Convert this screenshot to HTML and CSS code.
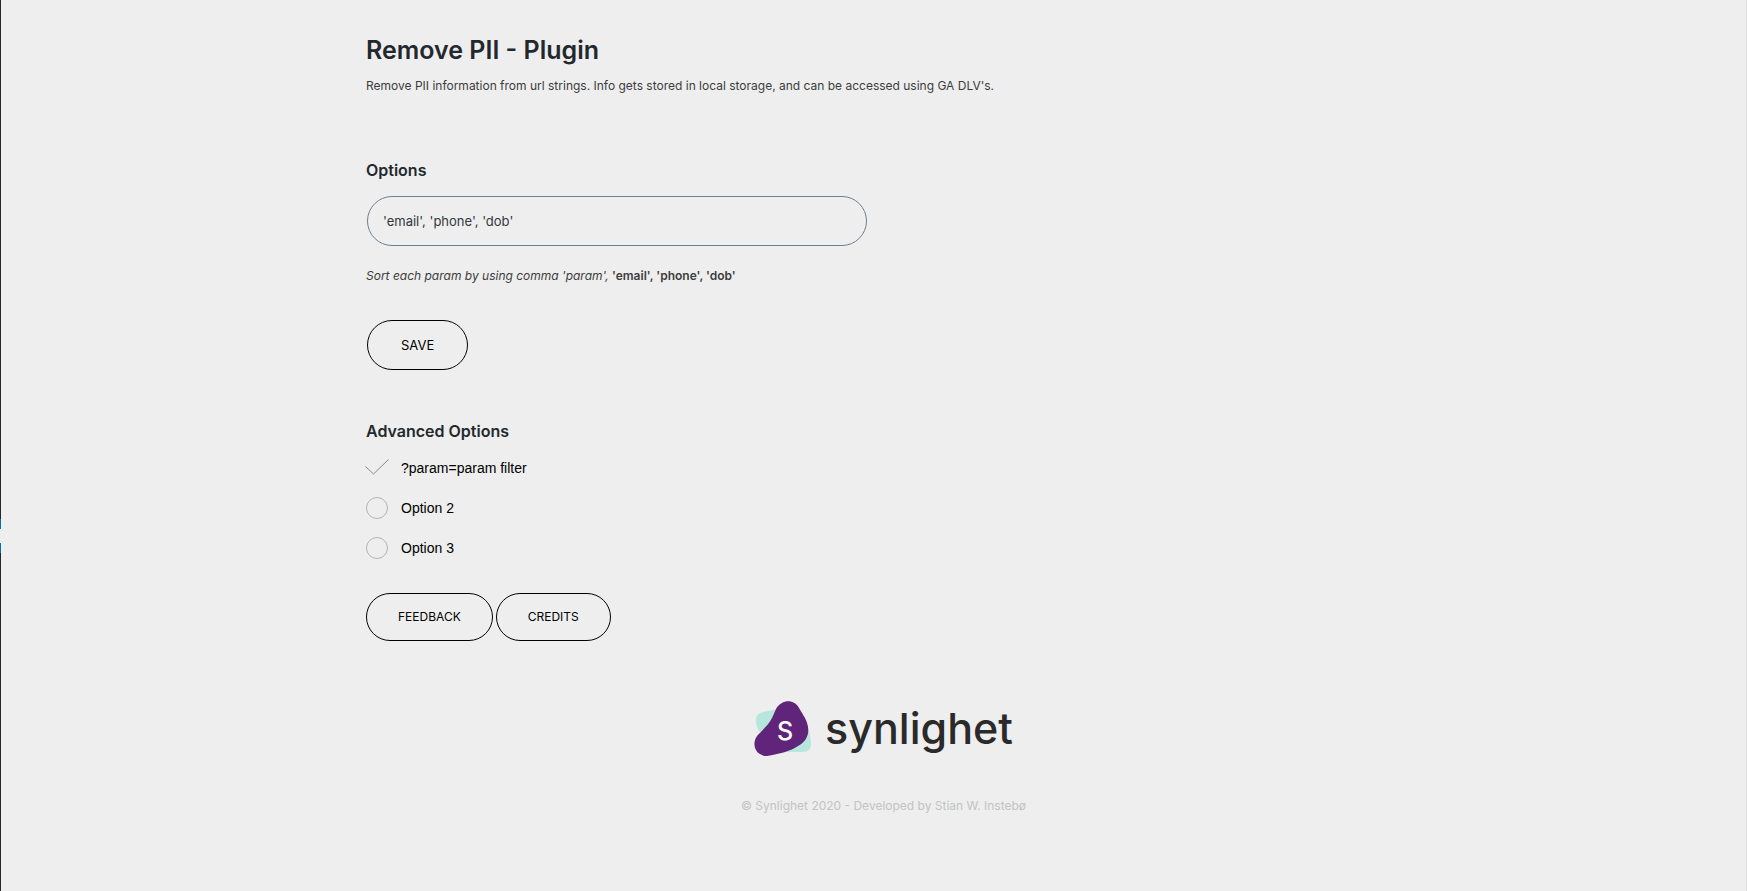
FILE: index.html
```html
<!DOCTYPE html>
<html lang="en">
<head>
<meta charset="utf-8">
<title>Remove PII - Plugin</title>
<link rel="stylesheet" href="styles.css">
</head>
<body>
<div class="menu-edge" aria-hidden="true">
  <span class="edge-dark"></span>
  <span class="edge-current"></span>
  <span class="edge-arrow"></span>
  <span class="edge-current"></span>
  <span class="edge-dark edge-rest"></span>
</div>
<main class="content">
  <div class="wrap">
    <h1 class="title">Remove PII - Plugin</h1>
    <p class="intro">Remove PII information from url strings. Info gets stored in local storage, and can be accessed using GA DLV's.</p>

    <form class="form">
      <h2 class="heading"><label for="params">Options</label></h2>
      <input class="field" id="params" type="text" value="'email', 'phone', 'dob'">
      <p class="hint"><em>Sort each param by using comma 'param',</em> <strong>'email', 'phone', 'dob'</strong></p>
      <button class="button button-save" type="button">SAVE</button>
    </form>

    <h2 class="heading">Advanced Options</h2>
    <ul class="options">
      <li><label class="option"><input class="check" type="checkbox" checked><svg class="tick" viewBox="0 0 24 18" aria-hidden="true"><path d="M0.5 8.5 8.5 16 23.5 1.5"/></svg><span>?param=param filter</span></label></li>
      <li><label class="option"><input class="check" type="checkbox"><span>Option 2</span></label></li>
      <li><label class="option"><input class="check" type="checkbox"><span>Option 3</span></label></li>
    </ul>

    <div class="links">
      <a class="button" href="#feedback">FEEDBACK</a>
      <a class="button" href="#credits">CREDITS</a>
    </div>

    <footer class="footer">
      <div class="logo">
        <svg class="mark" viewBox="0 0 57 55" aria-hidden="true">
          <path class="mark-back" d="M9 11 Q20 8 32 8 L50 21 Q57 31 57 43 Q57 51 48 51 L30 51 L5 30 Q-3 14 9 11Z"/>
          <path class="mark-front" d="M22 8 C28 -2 40 -2 45 7 L51 17 C58 31 53 40 44 45 C37 50 25 53 13 55 C2 55 -3 44 3 35 C9 28 14 25 18 17Z"/>
          <text class="mark-letter" x="31" y="39" text-anchor="middle">S</text>
        </svg>
        <span class="wordmark">synlighet</span>
      </div>
      <p class="copyright">© Synlighet 2020 - Developed by Stian W. Instebø</p>
    </footer>
  </div>
</main>
</body>
</html>
```
FILE: styles.css
```css
* {
  box-sizing: border-box;
}

body {
  display: flex;
  min-height: 100vh;
  margin: 0;
  background: #eee;
  border-right: 1px solid #ddd;
  color: #3c434a;
  font: 12px/20px Inter, "Liberation Sans", sans-serif;
}

.menu-edge {
  display: flex;
  flex-direction: column;
  width: 1px;
}

.edge-dark {
  height: 519px;
  background: #23282d;
}

.edge-current {
  height: 10px;
  background: #0073aa;
}

.edge-arrow {
  height: 14px;
}

.edge-rest {
  flex: 1;
}

.content {
  flex: 1;
  padding: 32px 0 72px 20px;
}

.wrap {
  width: 60%;
  margin: 0 auto;
}

.title {
  margin: 0 0 8px;
  color: #23282d;
  font-size: 25px;
  font-weight: 600;
  line-height: 36px;
}

.intro {
  margin: 0 0 64px;
  color: #3c3c3c;
}

.heading {
  margin: 0 0 16px;
  color: #23282d;
  font-size: 16px;
  font-weight: 600;
  line-height: 20px;
}

.field {
  display: block;
  width: 500px;
  max-width: 100%;
  height: 50px;
  margin-left: 1px;
  padding: 0 15px;
  border: 1px solid #6c7f8f;
  border-radius: 25px;
  background: transparent;
  color: #32373c;
  font: inherit;
  font-size: 13px;
}

.hint {
  margin: 20px 0 34px;
  color: #3c3c3c;
}

.hint strong {
  font-weight: 600;
}

.button {
  display: inline-flex;
  align-items: center;
  height: 48px;
  padding: 0 31px;
  border: 1px solid #000;
  border-radius: 25px;
  background: transparent;
  color: #000;
  font: inherit;
  text-decoration: none;
}

.button-save {
  height: 50px;
  margin-left: 1px;
  padding: 0 33px;
  font-size: 13px;
}

.form {
  margin-bottom: 51px;
}

.options {
  display: grid;
  gap: 18px;
  margin: 0;
  padding: 0;
  list-style: none;
}

.options li {
  display: flex;
}

.option {
  position: relative;
  display: flex;
  align-items: center;
  gap: 13px;
  color: #000;
  font: 14px/22px "Liberation Sans", Arial, sans-serif;
}

.check {
  width: 22px;
  height: 22px;
  margin: 0;
  appearance: none;
  border: 1px solid #b4b4b4;
  border-radius: 50%;
}

.check:checked {
  border-color: transparent;
}

.tick {
  position: absolute;
  top: 1px;
  left: -1px;
  width: 24px;
  height: 18px;
  fill: none;
  stroke: #888;
  pointer-events: none;
}

.links {
  display: flex;
  gap: 3px;
  margin-top: 34px;
}

.footer {
  margin-top: 60px;
  text-align: center;
}

.logo {
  display: flex;
  align-items: center;
  justify-content: center;
  gap: 14px;
}

.mark {
  width: 57px;
  height: 55px;
}

.mark-back {
  fill: #b7e6dd;
}

.mark-front {
  fill: #60247a;
}

.mark-letter {
  fill: #fff;
  font: 500 25px Inter, sans-serif;
}

.wordmark {
  color: #2a2a2a;
  font-size: 43px;
  font-weight: 500;
  line-height: 55px;
}

.copyright {
  margin: 40px 0 0;
  color: #c3c3c3;
}
```
